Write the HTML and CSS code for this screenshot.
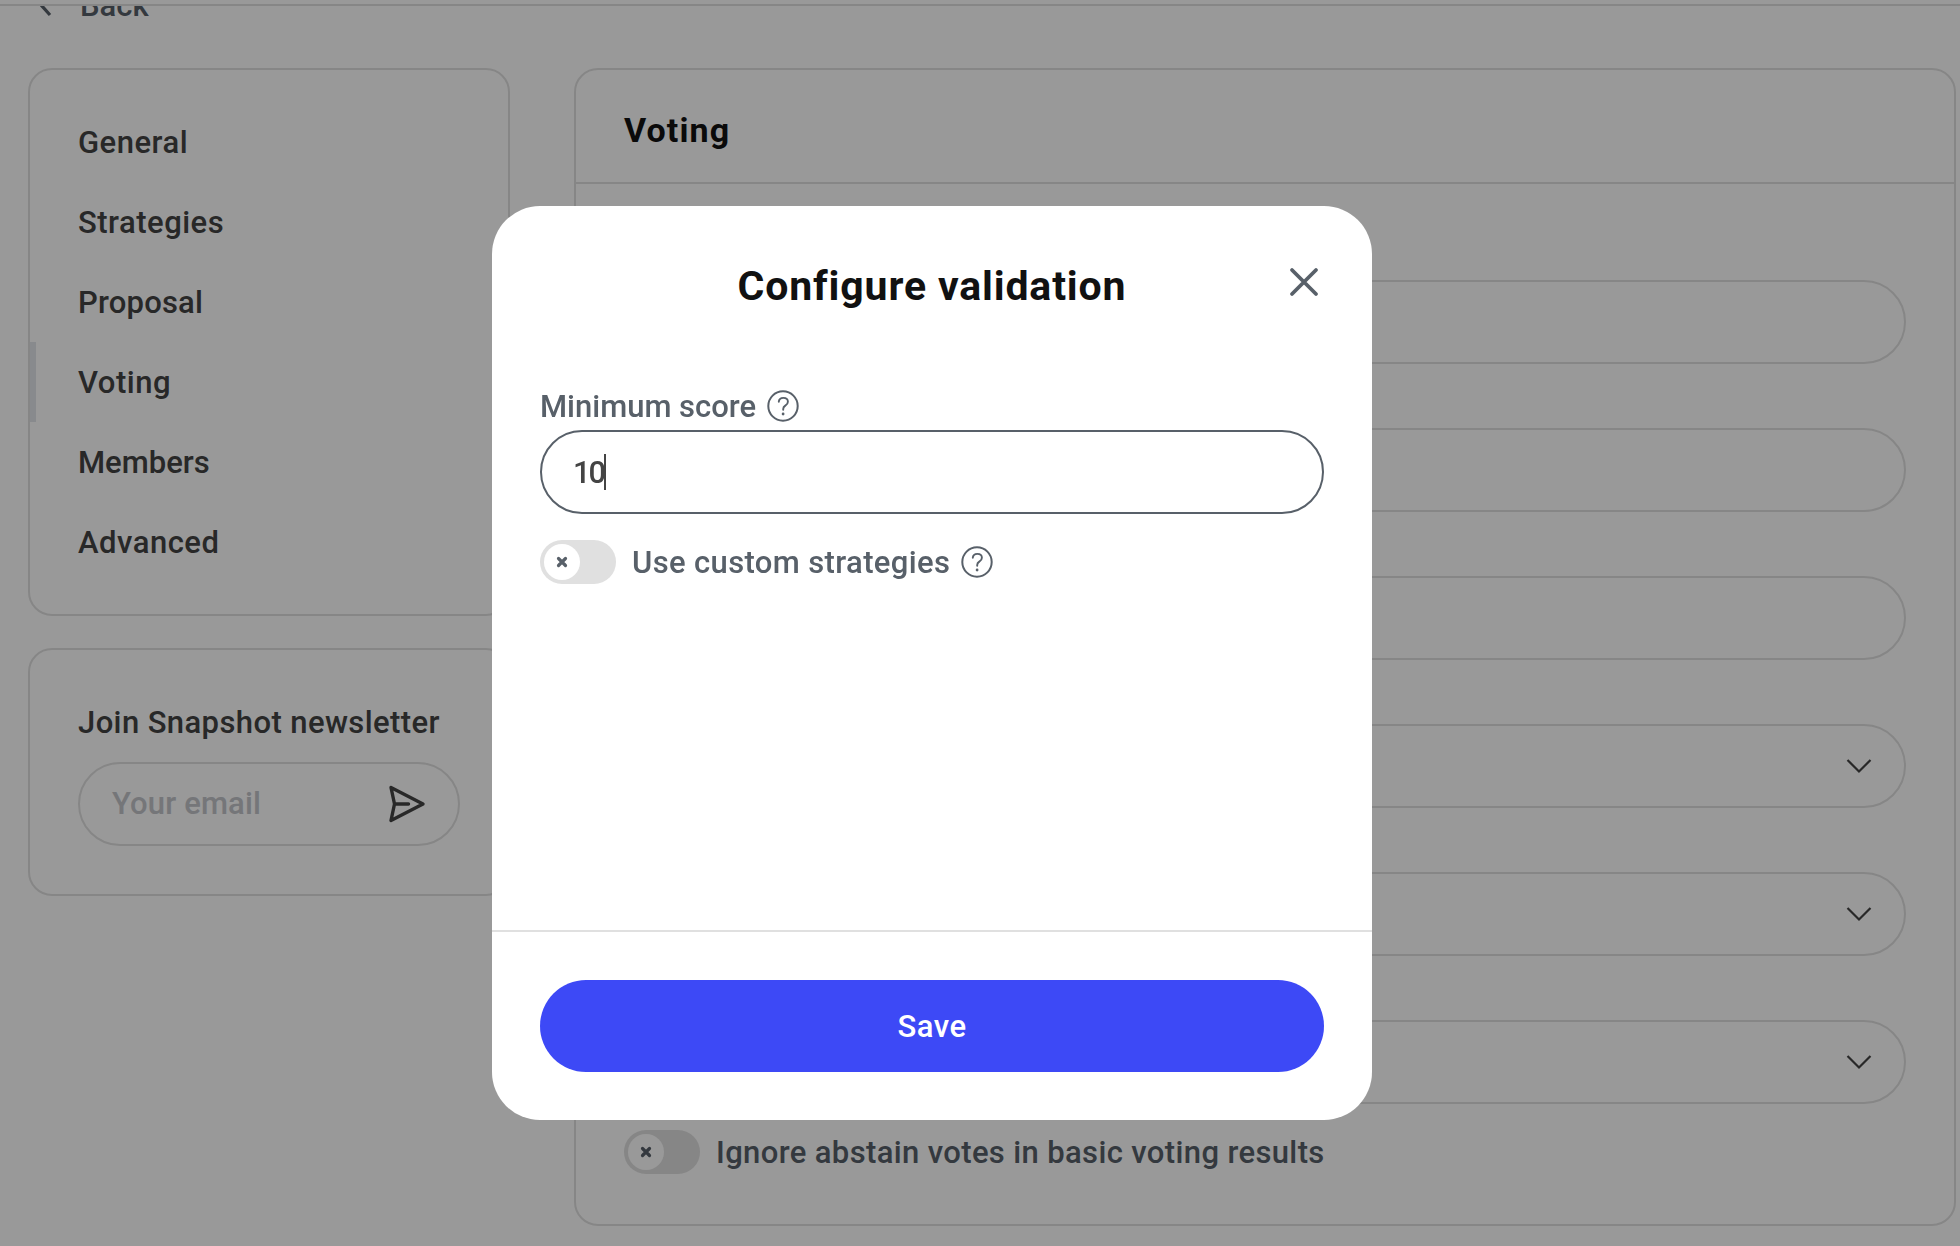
FILE: index.html
```html
<!DOCTYPE html>
<html lang="en">
<head>
<meta charset="utf-8">
<title>Voting settings</title>
<link rel="stylesheet" href="styles.css">
</head>
<body>
<div class="page">
  <div class="topbar"></div>
  <a class="back">
    <svg class="back-icon" width="12" height="22" viewBox="0 0 12 22"><path d="M10 2 2 11l8 9" fill="none" stroke="currentColor" stroke-width="3.2"/></svg>
    <span class="t-back">Back</span>
  </a>
  <div class="columns">
    <aside class="sidebar">
      <nav class="card nav">
        <a class="nav-item">General</a>
        <a class="nav-item">Strategies</a>
        <a class="nav-item t-proposal">Proposal</a>
        <a class="nav-item active">Voting</a>
        <a class="nav-item t-members">Members</a>
        <a class="nav-item">Advanced</a>
      </nav>
      <section class="card newsletter">
        <div class="newsletter-title">Join Snapshot newsletter</div>
        <div class="pill email">
          <span class="placeholder">Your email</span>
          <svg width="40" height="40" viewBox="0 0 40 40" fill="none" stroke="currentColor" stroke-width="3.4" stroke-linecap="round" stroke-linejoin="round"><path d="M5 3.500 37 20 5 36.500 8.500 20zM8.500 20h14"/></svg>
        </div>
      </section>
    </aside>
    <main class="card voting">
      <h2 class="voting-head">Voting</h2>
      <div class="fields">
        <div class="pill"></div>
        <div class="pill"></div>
        <div class="pill"></div>
        <div class="pill select"><svg width="26" height="16" viewBox="0 0 26 16"><path d="M1.500 2 13 13.500 24.500 2" fill="none" stroke="currentColor" stroke-width="2.200"/></svg></div>
        <div class="pill select"><svg width="26" height="16" viewBox="0 0 26 16"><path d="M1.500 2 13 13.500 24.500 2" fill="none" stroke="currentColor" stroke-width="2.200"/></svg></div>
        <div class="pill select"><svg width="26" height="16" viewBox="0 0 26 16"><path d="M1.500 2 13 13.500 24.500 2" fill="none" stroke="currentColor" stroke-width="2.200"/></svg></div>
      </div>
      <div class="switch-row">
        <span class="switch"><span class="knob"><svg width="12" height="12" viewBox="0 0 12 12"><path d="M2.500 2.500l7 7M9.500 2.500l-7 7" stroke="currentColor" stroke-width="3.200" stroke-linecap="round"/></svg></span></span>
        <span class="switch-text">Ignore abstain votes in basic voting results</span>
      </div>
    </main>
  </div>
</div>
<div class="overlay">
  <div class="modal" role="dialog">
    <header class="modal-head">
      <h3>Configure validation</h3>
      <svg class="close" width="32" height="32" viewBox="0 0 32 32"><path d="M4 4l24 24M28 4 4 28" stroke="currentColor" stroke-width="3.800" stroke-linecap="round"/></svg>
    </header>
    <div class="modal-body">
      <div class="label">
        <span>Minimum score</span>
        <svg class="help" width="32" height="32" viewBox="0 0 32 32" fill="none" stroke="currentColor"><circle cx="16" cy="16" r="14.700" stroke-width="2"/><path d="M11.800 11.700c.3-2.500 2-3.800 4.500-3.800 2.700 0 4.600 1.500 4.600 3.800 0 1.900-1 2.900-2.600 3.900-1.500 1-2.100 1.700-2.100 3.300v.9" stroke-width="1.900" stroke-linecap="round"/><circle cx="16.100" cy="24" r="1.400" fill="currentColor" stroke="none"/></svg>
      </div>
      <div class="pill score"><span class="score-value">10</span><span class="caret"></span></div>
      <div class="switch-row">
        <span class="switch"><span class="knob"><svg width="12" height="12" viewBox="0 0 12 12"><path d="M2.500 2.500l7 7M9.500 2.500l-7 7" stroke="currentColor" stroke-width="3.200" stroke-linecap="round"/></svg></span></span>
        <span class="switch-text">Use custom strategies</span>
        <svg class="help" width="32" height="32" viewBox="0 0 32 32" fill="none" stroke="currentColor"><circle cx="16" cy="16" r="14.700" stroke-width="2"/><path d="M11.800 11.700c.3-2.500 2-3.800 4.500-3.800 2.700 0 4.600 1.500 4.600 3.800 0 1.900-1 2.900-2.600 3.900-1.500 1-2.100 1.700-2.100 3.300v.9" stroke-width="1.900" stroke-linecap="round"/><circle cx="16.100" cy="24" r="1.400" fill="currentColor" stroke="none"/></svg>
      </div>
    </div>
    <footer class="modal-foot"><button class="save">Save</button></footer>
  </div>
</div>
</body>
</html>
```
FILE: styles.css
```css
* { box-sizing: border-box; }
body {
  margin: 0;
  overflow: hidden;
  background: #fff;
  color: #444;
  font: 500 31px/44px Roboto, sans-serif;
}
svg { display: block; flex: none; }
h2, h3 { margin: 0; font: inherit; }
.page { height: 1246px; overflow: hidden; }
.topbar { height: 6px; border-bottom: 2px solid #e0e0e0; }
.back {
  display: flex;
  align-items: center;
  gap: 28px;
  height: 62px;
  padding-left: 40px;
  overflow: hidden;
  color: #586069;
}
.back > * { margin-top: -63px; }
.columns { display: flex; align-items: flex-start; gap: 64px; padding: 0 4px 0 28px; }
.sidebar { display: flex; flex: none; flex-direction: column; gap: 32px; width: 482px; }
.card { border: 2px solid #e0e0e0; border-radius: 24px; }
.nav { padding: 32px 0; }
.nav-item {
  display: flex;
  align-items: center;
  height: 80px;
  padding: 2px 0 0 48px;
  letter-spacing: .5px;
}
.nav-item.active { padding-left: 42px; border-left: 6px solid #e3e6eb; }
.t-proposal { letter-spacing: .2px; }
.t-members { letter-spacing: 0; }
.newsletter { height: 248px; padding: 48px; }
.newsletter-title { height: 64px; padding-top: 3px; letter-spacing: .4px; white-space: nowrap; }
.pill {
  display: flex;
  align-items: center;
  height: 84px;
  border: 2px solid #e0e0e0;
  border-radius: 42px;
}
.email { justify-content: space-between; padding: 0 32px; }
.placeholder { color: #c3c5ca; letter-spacing: .15px; }
.voting { flex: 1; height: 1158px; }
.voting-head {
  height: 114px;
  padding: 38px 48px 0;
  border-bottom: 2px solid #e0e0e0;
  color: #111;
  font-size: 34px;
  font-weight: 700;
  letter-spacing: 1.1px;
}
.fields { display: flex; flex-direction: column; gap: 64px; padding: 96px 48px 26px; }
.select { justify-content: flex-end; padding-right: 32px; }
.switch-row { display: flex; align-items: center; height: 44px; color: #586069; white-space: nowrap; }
.switch-text { padding-top: 2px; letter-spacing: .37px; }
.voting .switch-row { padding-left: 48px; }
.switch { flex: none; width: 76px; height: 44px; margin-right: 16px; padding: 4px; border-radius: 22px; background: #e0e0e0; }
.knob { display: grid; place-items: center; width: 36px; height: 36px; border-radius: 50%; background: #fff; }
.overlay { position: fixed; inset: 0; padding: 206px 0 0 492px; background: rgba(0, 0, 0, .4); }
.modal {
  display: flex;
  flex-direction: column;
  width: 880px;
  height: 914px;
  border-radius: 48px;
  background: #fff;
  color: #586069;
}
.modal-head {
  display: grid;
  grid-template-columns: 48px 1fr 48px;
  align-items: center;
  height: 160px;
  padding: 0 48px;
}
.modal-head h3 {
  grid-column: 2;
  color: #111;
  font-size: 41px;
  font-weight: 700;
  letter-spacing: .85px;
  text-align: center;
  white-space: nowrap;
}
.close { margin: -8px 0 0 12px; }
.modal-body { flex: 1; padding: 18px 48px 0; }
.label { display: flex; align-items: center; height: 46px; white-space: nowrap; }
.help { margin-left: 11px; }
.label .help { margin-top: -2px; }
.score { padding-left: 32px; border-color: #586069; color: #444; margin-bottom: 26px; }
.score-value { margin-left: -1px; padding-top: 2px; letter-spacing: -2px; }
.caret { width: 2px; height: 36px; background: #444; }
.modal-foot { padding: 48px; border-top: 2px solid #e0e0e0; }
.save {
  display: block;
  width: 100%;
  height: 92px;
  padding: 2px 0 0;
  border: 0;
  border-radius: 46px;
  background: #3d49f6;
  color: #fff;
  font: inherit;
  letter-spacing: .5px;
}
```
